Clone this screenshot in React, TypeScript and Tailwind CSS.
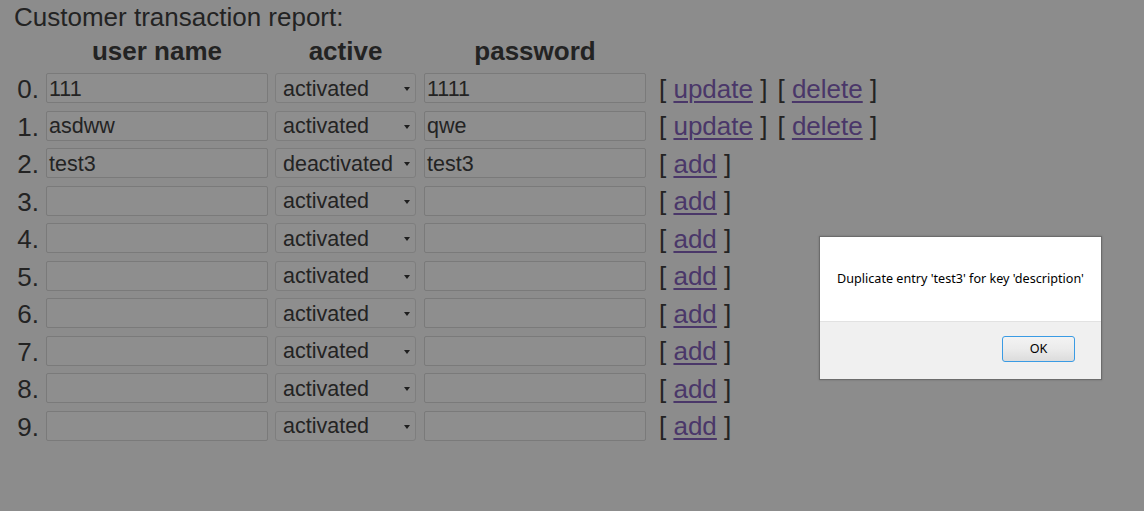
import React from 'react';

const rows = [
  { name: '111', active: 'activated', pass: '1111', saved: true },
  { name: 'asdww', active: 'activated', pass: 'qwe', saved: true },
  { name: 'test3', active: 'deactivated', pass: 'test3', saved: false },
  { name: '', active: 'activated', pass: '', saved: false },
  { name: '', active: 'activated', pass: '', saved: false },
  { name: '', active: 'activated', pass: '', saved: false },
  { name: '', active: 'activated', pass: '', saved: false },
  { name: '', active: 'activated', pass: '', saved: false },
  { name: '', active: 'activated', pass: '', saved: false },
  { name: '', active: 'activated', pass: '', saved: false },
];

function Field({ value, width }: { value: string; width: string }) {
  return (
    <div className={`${width} h-[30px] border border-[#7a7a7a] rounded-[2px] bg-[#8e8e8e] px-[2px] pt-[3px] flex items-center text-[21.5px] text-[#232323] leading-none`}>
      {value}
    </div>
  );
}

function Select({ value }: { value: string }) {
  return (
    <div className="w-[141px] h-[30px] border border-[#7e7e7e] rounded-[3px] bg-[#8e8e8e] pl-[7px] pr-[5px] flex items-center justify-between text-[21.5px] text-[#232323] leading-none">
      <span className="pt-[3px]">{value}</span>
      <span className="w-0 h-0 border-l-[3.5px] border-r-[3.5px] border-t-[4px] border-l-transparent border-r-transparent border-t-[#1f1f1f] mt-[2px]" />
    </div>
  );
}

function Action({ label }: { label: string }) {
  return (
    <span>
      [ <a href="#" className="text-[#4a3769] underline decoration-[2px] underline-offset-[3px]">{label}</a> ]
    </span>
  );
}

export default function App() {
  return (
    <div className="w-[1144px] h-[511px] bg-[#8c8c8c] relative overflow-hidden text-[#232323]" style={{ fontFamily: '"Liberation Sans", Arial, sans-serif' }}>
      <div className="pl-[14px] pt-[3px] text-[26px] leading-[28px]">Customer transaction report:</div>

      <div className="flex items-center h-[38px] mt-[1px] text-[26px] font-bold">
        <div className="w-[46px]" />
        <div className="w-[222px] text-center">user name</div>
        <div className="w-[7px]" />
        <div className="w-[141px] text-center">active</div>
        <div className="w-[8px]" />
        <div className="w-[222px] text-center">password</div>
      </div>

      <div className="flex flex-col gap-[7.5px] mt-[3px]">
        {rows.map((r, i) => (
          <div key={i} className="flex items-center h-[30px]">
            <div className="w-[42px] pr-[3px] pt-[2px] text-right text-[26px] leading-none mr-[4px]">{i}.</div>
            <Field value={r.name} width="w-[222px]" />
            <div className="w-[7px]" />
            <Select value={r.active} />
            <div className="w-[8px]" />
            <Field value={r.pass} width="w-[222px]" />
            <div className="ml-[13px] pt-[1px] flex gap-[10px] text-[26px] leading-none">
              {r.saved ? (
                <>
                  <Action label="update" />
                  <Action label="delete" />
                </>
              ) : (
                <Action label="add" />
              )}
            </div>
          </div>
        ))}
      </div>

      <div className="absolute left-[819px] top-[236px] w-[283px] h-[144px] border border-[#6c6c6c] bg-white flex flex-col shadow-[0_0_2px_rgba(0,0,0,0.2)]" style={{ fontFamily: '"Noto Sans", "Open Sans", sans-serif' }}>
        <div className="h-[84px] flex items-center justify-center text-[12.6px] text-black">
          Duplicate entry 'test3' for key 'description'
        </div>
        <div className="flex-1 bg-[#f0f0f0] border-t border-[#e2e2e2] flex justify-end items-start pt-[14px] pr-[26px]">
          <button className="w-[73px] h-[26px] rounded-[3px] border border-[#3a9be4] bg-gradient-to-b from-[#f3f3f3] via-[#ebebeb] to-[#dcdcdc] text-[12.6px] text-black leading-none">
            OK
          </button>
        </div>
      </div>
    </div>
  );
}
